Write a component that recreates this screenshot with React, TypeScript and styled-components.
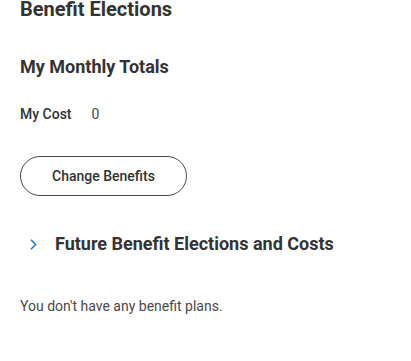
import React from "react";
import styled, { createGlobalStyle } from "styled-components";

const Global = createGlobalStyle`
  html, body { margin: 0; padding: 0; background: #fff; }
  body { font-family: Roboto, "Liberation Sans", Arial, sans-serif; color: #333333; }
`;

const Page = styled.div`
  display: flex;
  flex-direction: column;
  padding: 0 20px;
`;

const Title = styled.h1`
  margin: 0;
  font-size: 20px;
  line-height: 18px;
  font-weight: 700;
  color: #333333;
`;

const SectionTitle = styled.h2`
  margin: 37px 0 0;
  font-size: 18px;
  line-height: 24px;
  font-weight: 700;
  color: #333333;
`;

const CostRow = styled.div`
  display: flex;
  gap: 20px;
  margin-top: 25px;
  font-size: 14px;
  line-height: 20px;
`;

const CostLabel = styled.span`
  font-weight: 500;
  color: #333333;
`;

const CostValue = styled.span`
  font-weight: 400;
  color: #494949;
`;

const PillButton = styled.button`
  align-self: flex-start;
  margin-top: 32px;
  box-sizing: border-box;
  width: 167px;
  height: 40px;
  border: 1px solid #494949;
  border-radius: 20px;
  background: #fff;
  font-family: inherit;
  font-size: 14px;
  font-weight: 500;
  color: #333333;
  cursor: pointer;
  padding: 0;
`;

const Expander = styled.div`
  display: flex;
  align-items: center;
  margin-top: 36px;
  padding-left: 10px;
  gap: 18px;
`;

const ExpanderTitle = styled.h2`
  margin: 0;
  font-size: 18px;
  line-height: 24px;
  font-weight: 700;
  color: #333333;
`;

const Message = styled.p`
  margin: 40px 0 0;
  font-size: 14px;
  line-height: 20px;
  color: #494949;
`;

const Chevron = () => (
  <svg width="7" height="11" viewBox="0 0 7 11" aria-hidden="true">
    <path d="M1 0.8 L5.6 5.5 L1 10.2" fill="none" stroke="#0875e1" strokeWidth="1.4" />
  </svg>
);

export default function App() {
  return (
    <>
      <Global />
      <Page>
        <Title>Benefit Elections</Title>
        <SectionTitle>My Monthly Totals</SectionTitle>
        <CostRow>
          <CostLabel>My Cost</CostLabel>
          <CostValue>0</CostValue>
        </CostRow>
        <PillButton>Change Benefits</PillButton>
        <Expander>
          <Chevron />
          <ExpanderTitle>Future Benefit Elections and Costs</ExpanderTitle>
        </Expander>
        <Message>You don't have any benefit plans.</Message>
      </Page>
    </>
  );
}
